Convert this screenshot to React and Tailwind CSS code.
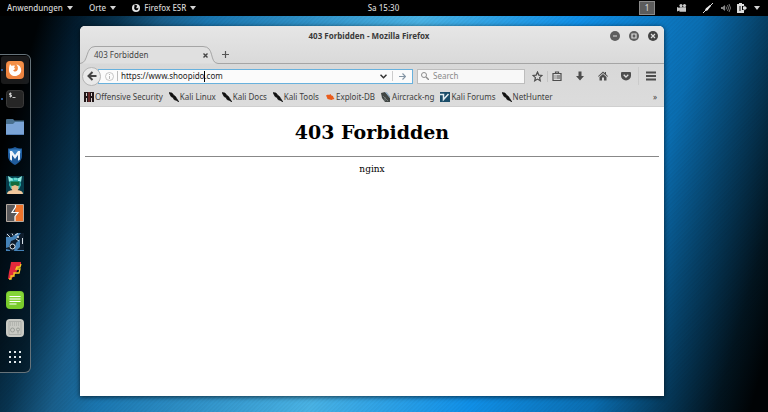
const ui = "font-['Noto_Sans','Open_Sans',sans-serif]";

function Caret() {
  return (
    <svg className="h-1 w-[6px] shrink-0" viewBox="0 0 6 4" fill="currentColor" aria-hidden="true">
      <path d="M0 0h6L3 4z" />
    </svg>
  );
}

function TopBar() {
  return (
    <header className="grid h-4 grid-cols-[1fr_auto_1fr] items-center bg-black pr-2 pl-[7px] text-[8px] leading-4 font-medium text-[#d4d4d4]">
      <nav className="flex items-center gap-4">
        <button className="flex items-center gap-1">Anwendungen <Caret /></button>
        <button className="flex items-center gap-1">Orte <Caret /></button>
        <button className="flex items-center gap-1">
          <svg className="h-2 w-2" viewBox="0 0 8 8" aria-hidden="true">
            <circle cx="4" cy="4" r="4" fill="#e4e4e4" />
            <path d="M2.600 0L4 1.200 5.200 1 4.600 2.200 5.200 3 4 3.600C4.600 5 6 4.400 6.200 3.200 6.800 5 5.600 6.400 4 6.200 2.400 6 1.800 4.500 2.300 3z" fill="#000" />
          </svg>
          Firefox ESR <Caret />
        </button>
      </nav>
      <time>Sa 15:30</time>
      <div className="flex items-center justify-end">
        <button className="mr-[22px] h-[14px] w-4 border border-[#8a8a8a] bg-[#5c5c5c] text-center leading-3">1</button>
        <svg className="mr-4 h-2 w-[10px]" viewBox="0 0 10 8" fill="#c8c8c8" aria-hidden="true">
          <circle cx="4" cy="1.600" r="1.600" /><circle cx="7.500" cy="1.600" r="1.600" />
          <path d="M2.500 3.200H9v4.500H2.500V6.500L0 7.500V3l2.500 1z" />
        </svg>
        <svg className="mr-2 h-[10px] w-[10px]" viewBox="0 0 10 10" aria-hidden="true">
          <path d="M0 10l3-3M7 3l3-3" stroke="#ddd" />
          <path d="M2 8c0-2 1-3 2-3.500L7 2l1 1-2.500 3C5 7 4 8 2 8z" fill="#eee" />
        </svg>
        <svg className="mr-[6px] h-[10px] w-[10px]" viewBox="0 0 10 10" fill="none" stroke="#777" aria-hidden="true">
          <path d="M0 4h1.500L4 2v6L1.500 6H0z" fill="#888" stroke="none" />
          <path d="M5 3.500q1 1.500 0 3M6.500 2q2 3 0 6M8 1q3 4 0 8" />
        </svg>
        <svg className="mr-[7px] h-[10px] w-[10px]" viewBox="0 0 10 10" aria-hidden="true">
          <path d="M2 0h3v1h2v2H5v4h2v3H0V1h2z" fill="#ddd" />
          <path d="M2 3h2v5H2z" fill="#777" />
          <path d="M6 3.500h1.500V2.500L10 5 7.500 7.500v-1H6z" fill="#ddd" />
        </svg>
        <Caret />
      </div>
    </header>
  );
}

const dockArt = [
  ["Firefox ESR", <>
    <rect width="18" height="18" rx="4" fill="#ee8440" />
    <rect x="1" width="16" height="8" rx="4" fill="#f8984e" opacity=".6" />
    <path d="M4 3l1.800 2C7 4.300 8 4.500 9 4.800L8 6.700l1.400 1.200-2.200 1.300c.6 1.500 2.600 1.700 3.800.5 1.500-1.600 1.200-4.200-.6-6.200 3 .6 5 3 4.800 6-.3 3.200-2.900 5.500-6.200 5.500S3.200 12.700 3 9.400C2.900 7 3.400 5 4 3z" fill="#fff" />
  </>],
  ["Terminal", <>
    <rect x=".5" y=".5" width="17" height="17" rx="3" fill="#262626" stroke="#3a3a3a" />
    <path d="M5.500 3.500h-2v1.500h2v1.500h-2M4.500 2.500v5M6.500 7.500h3" fill="none" stroke="#d0d0d0" strokeWidth=".9" />
  </>],
  ["Files", <>
    <path d="M0 2q0-1 1-1h6l1.500 1.500H18V6H0z" fill="#49708f" />
    <path d="M0 6h7l2-2h9v13H0z" fill="#7ba4d6" />
    <path d="M0 16h18v1H0z" fill="#5580b5" />
  </>],
  ["Metasploit", <>
    <path d="M9 0c2 1.200 4.500 1.500 7 1.500v7.500c0 4-3 7-7 9-4-2-7-5-7-9V1.500C4.500 1.500 7 1.200 9 0z" fill="#1f5b9c" />
    <path d="M3 2.500h12V6L9 9 3 6z" fill="#3d83c4" />
    <path d="M4 12.500V4h2L9 8l3-4h2v8.500l-2 1.300V8L9 12 6 8v5.800z" fill="#f1f5fa" />
  </>],
  ["Armitage", <>
    <path d="M0 0h18v18H0z" fill="#073b49" />
    <path d="M4 3q5-3 10 0l1 6-2 4H5L3 9z" fill="#2bb5b0" />
    <path d="M3 6L2 0l5 3zM15 6l1-6-5 3z" fill="#8ce8de" />
    <path d="M5.500 8h7v5l-1.500 2H7l-1.500-2z" fill="#e8be8c" />
    <path d="M4.500 5.500h9v4l-2 .5-2.500-1-2.500 1-2-.5z" fill="#136b3b" />
    <path d="M1 18c0-2.500 2-3.500 6-4h4c4 .5 6 1.500 6 4z" fill="#f0c79c" />
    <path d="M5 4h2M8 3h3M12 4.500h2" stroke="#a7efe8" />
  </>],
  ["Burp Suite", <>
    <path d="M.5.500h17v17H.5z" fill="#58585a" />
    <path d="M9.500 1H17v16H9v-4l3.500-4H9z" fill="#ee742c" />
    <path d="M9.500 1v2L6 8.500h6L9 12.500V17" fill="none" stroke="#fff" strokeWidth="1.200" />
    <path d="M.5.500h17v17H.5z" fill="none" stroke="#b5aaa0" />
  </>],
  ["Maltego", <>
    <path d="M0 0h18v18H0z" fill="#0e1d2c" />
    <path d="M0 4h6l5-4h4l-5 6-5 2-2 6-3 1zM0 16l4 1v1H0zM10 10l4-4v8l-3 3h7v1H8z" fill="#4583b8" />
    <path d="M1 1l3 3M6 .500l1 2M9 2l3-1.500M10 6l3 2M16.500 5v6" fill="none" stroke="#d5dfe6" />
    <circle cx="6.500" cy="13.500" r="2.500" fill="#0b1119" stroke="#e6edf2" />
    <circle cx="12" cy="4" r="1" fill="#dfe9f0" />
  </>],
  ["Faraday", <>
    <path d="M5 0h10v3l-2 3h-1l-1 3-2 3-2 3-2 2H2l1-7 1-4z" fill="#e3293b" />
    <path d="M15 2l-1 3h-3l-1 2h4l-1 4H8v3H5v3H3" fill="none" stroke="#f5cb25" strokeWidth="1.300" />
  </>],
  ["Text Editor", <>
    <rect width="18" height="18" rx="4" fill="#79cc2c" />
    <rect x="1" y="1" width="16" height="9" rx="3" fill="#8ad93d" opacity=".7" />
    <path d="M3.500 5.500h11M3.500 8h11M3.500 10.500h11M3.500 13h7" stroke="#fff" strokeWidth="1.200" />
  </>],
  ["Tweak Tool", <>
    <rect width="18" height="18" rx="4" fill="#c8c9c3" />
    <path d="M3 2.500h12v13H3z" fill="none" stroke="#9b9e98" strokeWidth=".6" />
    <path d="M4 4h10M4 6h10" stroke="#a0a39d" strokeDasharray="1 1" />
    <g fill="none" stroke="#999d97"><circle cx="6.500" cy="11" r="2" /><circle cx="12" cy="10.500" r="1.500" /><path d="M12 12v2.500" /></g>
  </>],
  ["Show Applications", <>
    <path d="M3 4h2M8 4h2M13 4h2M3 9h2M8 9h2M13 9h2M3 14h2M8 14h2M13 14h2" stroke="#dfe7ea" strokeWidth="2" />
  </>],
];

function Dock() {
  return (
    <nav aria-label="Dock" className="mt-[38px] flex h-[319px] w-[31px] shrink-0 flex-col justify-between self-start rounded-r-[6px] border border-l-0 border-[#66737a] bg-black/45 py-[1px]">
      {dockArt.map(([name, art], i) => (
        <button
          key={name}
          aria-label={name}
          className={`ml-[1px] flex h-7 w-7 items-center rounded-[3px] ${i === 0 ? "bg-white/10" : ""}`}
        >
          <span className={`mr-[3px] h-[2px] w-[2px] rounded-full ${i < 2 ? "bg-[#3d78c8]" : ""}`} />
          <svg className="h-[18px] w-[18px] shrink-0" viewBox="0 0 18 18" aria-hidden="true">{art}</svg>
        </button>
      ))}
    </nav>
  );
}

function TitleBar() {
  return (
    <div className="grid h-5 shrink-0 grid-cols-[1fr_auto_1fr] items-center pr-[6px] text-[8px] font-bold text-[#3a3a3a]">
      <span />
      <h2>403 Forbidden - Mozilla Firefox</h2>
      <div className="flex justify-end gap-[9px]">
        {[
          ["Minimize", "M3 5h4"],
          ["Maximize", "M3 3h4v4H3z"],
          ["Close", "M3 3l4 4M7 3L3 7"],
        ].map(([label, d]) => (
          <button key={label} aria-label={label}>
            <svg className="h-[10px] w-[10px]" viewBox="0 0 10 10" aria-hidden="true">
              <circle cx="5" cy="5" r="5" fill={label === "Close" ? "#444" : "#5d5d5d"} />
              <path d={d} fill="none" stroke="#dedede" strokeWidth="1.200" />
            </svg>
          </button>
        ))}
      </div>
    </div>
  );
}

function TabStrip() {
  return (
    <div className="flex h-[18px] shrink-0 items-stretch text-[8px] text-[#444]">
      <div className="relative flex w-[138px] items-center justify-between pr-[10px] pl-[14px]">
        <svg className="absolute inset-0 h-full w-full" viewBox="0 0 138 18" preserveAspectRatio="none" aria-hidden="true">
          <path d="M0 17.500C9 17 5 .500 15 .500h108C135 .500 129 17 138 17.500" fill="#e0e0e0" stroke="#a5a5a5" />
        </svg>
        <span className="relative">403 Forbidden</span>
        <button className="relative" aria-label="Close tab">
          <svg className="h-[5px] w-[5px]" viewBox="0 0 5 5" stroke="#444" strokeWidth="1.400" aria-hidden="true"><path d="M.5.500l4 4M4.500.500l-4 4" /></svg>
        </button>
      </div>
      <div className="flex flex-1 items-center border-b border-[#a5a5a5] pl-[3px]">
        <button aria-label="New tab">
          <svg className="h-[9px] w-[9px]" viewBox="0 0 9 9" stroke="#555" strokeWidth="1.200" aria-hidden="true"><path d="M4.500 1v7M1 4.500h7" /></svg>
        </button>
      </div>
    </div>
  );
}

function Toolbar() {
  return (
    <div className="flex h-6 shrink-0 items-center pr-2 pl-[2px] text-[8px]">
      <button aria-label="Back" className="z-10 flex h-[19px] w-[19px] shrink-0 items-center justify-center rounded-full border border-[#b5b5b5] bg-[#e9e9e9]">
        <svg className="h-[10px] w-[10px]" viewBox="0 0 10 10" fill="none" stroke="#444" strokeWidth="2" aria-hidden="true"><path d="M9.500 5H2M5.500 1L1.500 5l4 4" /></svg>
      </button>
      <div className="-ml-[3px] flex h-[15px] min-w-0 flex-1 items-center border border-[#68b1dd] bg-[#fbfbfb] pl-[6px]">
        <svg className="h-[9px] w-[9px] shrink-0" viewBox="0 0 9 9" fill="none" stroke="#b8b8b8" aria-hidden="true"><circle cx="4.500" cy="4.500" r="4" strokeWidth=".8" /><path d="M4.500 2v1M4.500 4v3" /></svg>
        <span className="mx-[3px] h-[10px] w-[1px] bg-[#bbb]" />
        <div className="relative flex h-full flex-1 items-center">
          <input aria-label="Address" defaultValue="https://www.shoopido.com" className="w-full bg-transparent text-[#1c1c1c] outline-none" />
          <span className="absolute left-[83px] h-[11px] w-[1px] bg-black" />
        </div>
        <button aria-label="Show history" className="mr-[5px]">
          <svg className="h-[5px] w-[7px]" viewBox="0 0 7 5" fill="none" stroke="#333" strokeWidth="1.500" aria-hidden="true"><path d="M.5.800l3 3 3-3" /></svg>
        </button>
        <span className="h-[10px] w-[1px] bg-[#ccc]" />
        <button aria-label="Go" className="mx-[6px]">
          <svg className="h-[7px] w-[7px]" viewBox="0 0 7 7" fill="none" stroke="#8495a5" strokeWidth="1.200" aria-hidden="true"><path d="M0 3.500h6M3.500.500l3 3-3 3" /></svg>
        </button>
      </div>
      <label className="ml-1 flex h-[15px] w-[108px] shrink-0 items-center gap-1 border border-[#bdbdbd] bg-[#f8f8f8] px-[3px]">
        <svg className="h-2 w-2 shrink-0" viewBox="0 0 8 8" fill="none" stroke="#8c8c8c" aria-hidden="true"><circle cx="3" cy="3" r="2.500" /><path d="M5 5l3 3" strokeWidth="1.400" /></svg>
        <input aria-label="Search" placeholder="Search" className="w-full min-w-0 bg-transparent outline-none placeholder:text-[#8a8a8a]" />
      </label>
      <div className="ml-[7px] flex shrink-0 items-center text-[#4d4d4d]">
        <button aria-label="Bookmark">
          <svg className="h-[11px] w-[11px]" viewBox="0 0 11 11" fill="none" stroke="currentColor" strokeWidth="1.200" aria-hidden="true"><path d="M5.500 1l1.300 3.100 3.200.3-2.400 2.200.7 3.200-2.800-1.700-2.800 1.700.7-3.200L1 4.400l3.200-.3z" /></svg>
        </button>
        <span className="mx-1 h-[11px] w-[1px] bg-[#c4c4c4]" />
        <button aria-label="Bookmarks menu">
          <svg className="h-[10px] w-[10px]" viewBox="0 0 10 10" fill="none" stroke="currentColor" aria-hidden="true"><path d="M1 2.500h8v7H1zM3.500 2.500V1h3v1.500M2.500 5h1M4.500 5H8M2.500 7h1M4.500 7H8" strokeWidth="1.200" /></svg>
        </button>
        <button aria-label="Downloads" className="ml-[13px]">
          <svg className="h-[10px] w-[10px]" viewBox="0 0 10 10" fill="currentColor" aria-hidden="true"><path d="M3.500.500h3V5H9L5 9.500 1 5h2.500z" /></svg>
        </button>
        <button aria-label="Home" className="ml-[13px]">
          <svg className="h-[10px] w-[10px]" viewBox="0 0 10 10" fill="currentColor" aria-hidden="true"><path d="M5 .500l1.800 1.700V1H8v2.300L10 5.200l-.6.600L5 2 .600 5.800 0 5.200zM5 3l3.500 3v3.500H6V6.500H4v3H1.500V6z" /></svg>
        </button>
        <button aria-label="Pocket" className="ml-[13px]">
          <svg className="h-[10px] w-[10px]" viewBox="0 0 10 10" aria-hidden="true"><path d="M1 1h8q1 0 1 1v2.500a5 5 0 0 1-10 0V2q0-1 1-1z" fill="currentColor" /><path d="M2.700 3.800L5 6l2.300-2.200" fill="none" stroke="#ddd" strokeWidth="1.300" /></svg>
        </button>
        <span className="mr-[7px] ml-[7px] h-[18px] w-[1px] bg-[#cbcbcb]" />
        <button aria-label="Open menu">
          <svg className="h-[10px] w-[10px]" viewBox="0 0 10 10" stroke="currentColor" strokeWidth="1.800" aria-hidden="true"><path d="M0 1.500h10M0 5h10M0 8.500h10" /></svg>
        </button>
      </div>
    </div>
  );
}

const kali = <path d="M0 0.500l3 .5 2 2.500 1.500 1L8 7l2 3-2.500-1.500L5 7.500 4 5.500 2 4.500 1 2.500z" fill="#111" stroke="#111" strokeWidth=".6" />;

const bookmarks = [
  ["Offensive Security", <><path d="M0 0h10v10H0z" fill="#211718" /><path d="M2.500 1v3M7.500 1v3M2.500 6v4M7.500 6v4" stroke="#dacfcf" /><path d="M5 0v10" stroke="#762d2b" strokeWidth="1.500" /></>],
  ["Kali Linux", kali],
  ["Kali Docs", kali],
  ["Kali Tools", kali],
  ["Exploit-DB", <path d="M1 3.500l2-1 1 .5 1.500-1 1 1.500 1.500.5.5 1.500 1 1.500-2 .5-1 .5-2-.5-2-.5-.5-1.500z" fill="#ea5c1c" />],
  ["Aircrack-ng", <><path d="M0 1l4-1 5 6v4H4L1 6z" fill="#424745" /><path d="M4 0l2 .5 3 4V6z" fill="#88a8c4" /><path d="M2 4l5 5M4 9V5" stroke="#858d8c" strokeWidth=".7" /></>],
  ["Kali Forums", <><path d="M0 0h10v10H0z" fill="#1c4d69" /><path d="M0 2.500h3.500v5l5-5.500" fill="none" stroke="#e3edf2" strokeWidth="1.500" /></>],
  ["NetHunter", kali],
];

function BookmarksBar() {
  return (
    <nav aria-label="Bookmarks" className="flex h-[19px] shrink-0 items-center gap-[6px] border-b border-[#cfcfcf] pr-[7px] pl-1 text-[8px] text-[#404040]">
      {bookmarks.map(([name, art]) => (
        <a key={name} href="#" className="flex items-center gap-[1px] whitespace-nowrap">
          <svg className="h-[10px] w-[10px] shrink-0" viewBox="0 0 10 10" aria-hidden="true">{art}</svg>
          {name}
        </a>
      ))}
      <button aria-label="More bookmarks" className="ml-auto">»</button>
    </nav>
  );
}

export default function App() {
  return (
    <div className={`${ui} flex min-h-screen flex-col bg-[repeating-linear-gradient(135deg,rgba(0,0,0,0.03)_0px,rgba(0,0,0,0.03)_1px,transparent_2px,transparent_3px),linear-gradient(106deg,#000305_5%,#02192a_9%,#083450_14%,#195e8a_19%,#1a76b0_24%,#49b2e4_48%,#1090e8_66%,#0a6db0_80%,#064066_87%,#02141f_94%,#000305_98%)]`}>
      <TopBar />
      <main className="flex flex-1">
        <Dock />
        <section className="mt-[10px] mr-[104px] mb-4 ml-[49px] flex min-w-0 flex-1 flex-col overflow-hidden rounded-t-[5px] bg-white shadow-[0_1px_5px_rgba(0,0,0,0.7)]">
          <div className="flex flex-col bg-linear-to-b from-[#e6e6e6] via-[#d8d8d8] to-[#dcdcdc]">
            <TitleBar />
            <TabStrip />
            <Toolbar />
            <BookmarksBar />
          </div>
          <div className="px-[5px] pt-[13px] text-center font-['DejaVu_Serif',serif] text-black">
            <h1 className="text-[19px] leading-6 font-bold">403 Forbidden</h1>
            <hr className="mt-3 border-t border-[#888]" />
            <p className="mt-1 text-[9px] leading-4">nginx</p>
          </div>
        </section>
      </main>
    </div>
  );
}
